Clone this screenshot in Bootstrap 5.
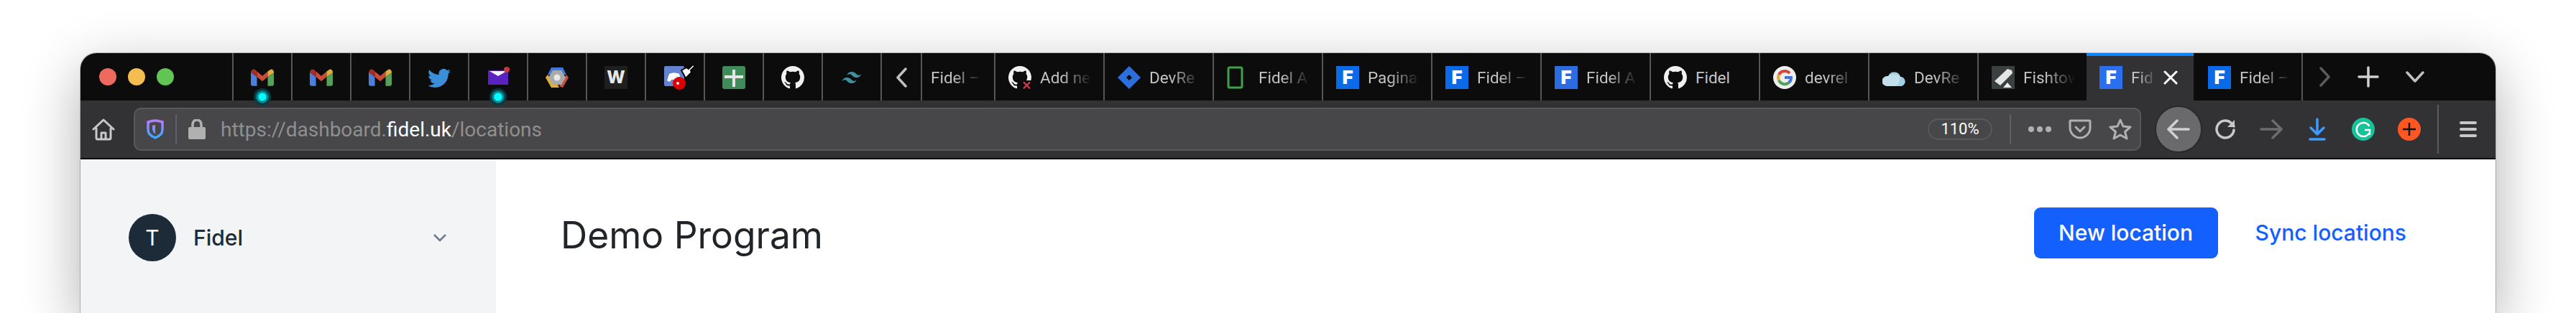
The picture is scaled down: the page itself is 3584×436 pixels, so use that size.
<!doctype html>
<html lang="en"><head><meta charset="utf-8"><title>Demo Program</title>
<link href="https://cdn.jsdelivr.net/npm/bootstrap@5.3.0/dist/css/bootstrap.min.css" rel="stylesheet">
<style>
html,body{height:436px;overflow:hidden;background:#fff}
body{font-family:"Inter","Liberation Sans",sans-serif}
.stage{padding:74px 112px 0}
.win{height:362px;border-radius:22px 22px 0 0;box-shadow:0 24px 80px rgba(0,0,0,.32),0 0 0 1px rgba(0,0,0,.22);background:#fff;overflow:hidden}
.tabbar{height:66px;background:#0c0c0c;color:#b4b4b4}
.lights{width:211px;padding-left:26px;gap:16px;flex:none}
.light{width:24px;height:24px;border-radius:50%}
.l-red{background:#ee6a5f}.l-yel{background:#f5bd4f}.l-grn{background:#61c454}
.pin,.wtab{height:66px;border-left:2px solid #565656;position:relative;flex:none;padding-top:2px}
.pin{width:82px;justify-content:center}
.wtab{width:152px;padding-left:18px;gap:12px}
.wtab.first{width:102px;padding-left:12px}
.wtab.cur{width:149px;background:#323234;border-left:0;padding-top:0;padding-bottom:2px;border-top:4px solid #0a84ff}
.wtab.after{border-left:0;padding-left:20px;border-right:2px solid #565656}
.scrollbtn{width:56px}
.ttl{flex:1;min-width:0;overflow:hidden;white-space:nowrap;font:400 22.5px/32px "Roboto","Liberation Sans",sans-serif;color:#c4c4c4;-webkit-mask-image:linear-gradient(to right,#000 30px,transparent 72px);mask-image:linear-gradient(to right,#000 30px,transparent 72px)}
.ttl.open{-webkit-mask-image:none;mask-image:none}
.ttl.short{flex:none;width:33px;-webkit-mask-image:linear-gradient(to right,#000 10px,transparent 36px);mask-image:linear-gradient(to right,#000 10px,transparent 36px)}
.ico{width:32px;height:32px;flex:none;display:block}
.ico-wide{width:44px;height:36px;flex:none;display:block;margin-left:14px}
.ffav{width:32px;height:32px;flex:none;background:#0a6ae8;color:#fff;font:900 26px/32px "Inter",sans-serif;text-align:center}
.ffav.alt{background:#2b6de0}.ffav.hi{background:#2a6ff0}
.wfav{width:32px;height:32px;background:#1f1f1f;color:#e8e8e8;font:800 24px/32px "Inter",sans-serif;text-align:center}
.sound{position:absolute;left:28px;bottom:-7px;width:24px;height:24px;border-radius:50%;background:radial-gradient(circle,#0ff 0 5px,#0a8d96 6px 8px,#073c42 9px 12px)}
.closex{margin:0 23px 0 0;flex:none}
.tailend{padding-left:23px}
.plusgap,.chevgap{margin-left:37px}
.bar-tools{height:80px;background:#323234;padding-left:16px}
.homeico{margin-right:26px}
.edge{height:2px;background:#050505}
.urlbox{width:2793px;height:60px;background:#474749;border:2px solid #59595b;border-radius:10px;padding:0 11px 0 16px;flex:none}
.sep-v{width:2px;height:42px;background:#5c6068;flex:none}
.addr{font:400 28px/1 "Roboto","Liberation Sans",sans-serif;color:#8f8f90;white-space:nowrap;margin-left:21px;padding-top:2px}
.addr b{font-weight:400;color:#fff}
.zoompill{width:90px;height:30px;border:2px solid #58585a;border-radius:15px;color:#fff;font:400 22px/26px "Roboto",sans-serif;text-align:center}
.backcirc{width:66px;height:66px;border-radius:50%;background:#6a6a6c;border:2px solid #2a2a2c;margin-left:19px;flex:none}
.slot{width:64px;height:40px;flex:none}
.sep-tall{width:2px;height:68px;background:#5a5a5c;margin-left:7px;flex:none}
.hamb{margin-left:29px;flex:none}
.side{width:578px;background:#f3f4f6;padding:76px 68px 0 67px;gap:24px;height:214px;flex:none}
.avatar{width:66px;height:66px;border-radius:50%;background:#1d2a38;color:#fff;font:400 30px/66px "Inter",sans-serif;text-align:center}
.orgname{font:500 30px/30px "Inter",sans-serif;color:#1d2a38;margin-top:18px}
.orgchev{margin-top:27px}
.mainpane{padding:67px 124px 0 90px}
.pagehead{height:71px}
.pagetitle{font:400 51.5px/1 "Inter",sans-serif;color:#212529;margin:0;padding-top:6px}
.btn.newbtn{width:256px;height:71px;background:#1360ff;border:0;border-radius:9px;color:#fff;font:500 30px/71px "Inter",sans-serif;padding:0}
.btn.syncbtn{background:none;border:0;color:#1360ff;font:500 30px/71px "Inter",sans-serif;padding:0;margin-left:52px;text-decoration:none}
</style></head>
<body>
<svg width="0" height="0" class="position-absolute">
<symbol id="gm" viewBox="0 0 30 22"><path fill="#4a7fdc" d="M0 4l8 6v12H2a2 2 0 0 1-2-2z"/><path fill="#a52d25" d="M0 5c0-4 3-6 6-4l2 2v7L0 4z"/><path fill="#cc4a38" d="M8 3l7 6 7-6v7l-7 6-7-6z"/><path fill="#e0ac3a" d="M22 3l3-2c2-2 5 0 5 3v1l-8 5z"/><path fill="#55a05a" d="M22 10l8-5v15a2 2 0 0 1-2 2h-6z"/></symbol>
<symbol id="gh" viewBox="0 0 16 16"><path fill="#f0f0f0" d="M8 0C3.58 0 0 3.58 0 8c0 3.54 2.29 6.53 5.47 7.59.4.07.55-.17.55-.38 0-.19-.01-.82-.01-1.49-2.01.37-2.53-.49-2.69-.94-.09-.23-.48-.94-.82-1.13-.28-.15-.68-.52-.01-.53.63-.01 1.08.58 1.23.82.72 1.21 1.87.87 2.33.66.07-.52.28-.87.51-1.07-1.78-.2-3.64-.89-3.64-3.95 0-.87.31-1.59.82-2.15-.08-.2-.36-1.02.08-2.12 0 0 .67-.21 2.2.82.64-.18 1.32-.27 2-.27.68 0 1.36.09 2 .27 1.53-1.04 2.2-.82 2.2-.82.44 1.1.16 1.92.08 2.12.51.56.82 1.27.82 2.15 0 3.07-1.87 3.75-3.65 3.95.29.25.54.73.54 1.48 0 1.07-.01 1.93-.01 2.2 0 .21.15.46.55.38A8.012 8.012 0 0 0 16 8c0-4.42-3.58-8-8-8z"/></symbol>
</svg>
<div class="stage">
<div class="win">
  <div class="tabbar d-flex">
    <div class="lights d-flex align-items-center"><span class="light l-red"></span><span class="light l-yel"></span><span class="light l-grn"></span></div>
    <div class="pin d-flex align-items-center"><svg class="ico"><use href="#gm"/></svg><span class="sound"></span></div>
    <div class="pin d-flex align-items-center"><svg class="ico"><use href="#gm"/></svg></div>
    <div class="pin d-flex align-items-center"><svg class="ico"><use href="#gm"/></svg></div>
    <div class="pin d-flex align-items-center"><svg class="ico" viewBox="0 0 16 16"><path fill="#3b8fd9" d="M5.026 15c6.038 0 9.341-5.003 9.341-9.334 0-.14 0-.282-.006-.422A6.685 6.685 0 0 0 16 3.542a6.658 6.658 0 0 1-1.889.518 3.301 3.301 0 0 0 1.447-1.817 6.533 6.533 0 0 1-2.087.793A3.286 3.286 0 0 0 7.875 6.03a9.325 9.325 0 0 1-6.767-3.429 3.289 3.289 0 0 0 1.018 4.382A3.323 3.323 0 0 1 .64 6.575v.045a3.288 3.288 0 0 0 2.632 3.218 3.203 3.203 0 0 1-.865.115 3.23 3.23 0 0 1-.614-.057 3.283 3.283 0 0 0 3.067 2.277A6.588 6.588 0 0 1 .78 13.58a6.32 6.32 0 0 1-.78-.045A9.344 9.344 0 0 0 5.026 15z"/></svg></div>
    <div class="pin d-flex align-items-center"><svg class="ico" viewBox="0 0 32 32"><rect x="2" y="6" width="28" height="20" fill="#5a22c0"/><path fill="#f4f4f4" d="M4 7h24l-12 7z"/><circle cx="28" cy="5" r="4" fill="#c8383c"/></svg><span class="sound"></span></div>
    <div class="pin d-flex align-items-center"><svg class="ico" viewBox="0 0 32 32"><path fill="#3f78e0" d="M8 2h16l5 10H3z"/><path fill="#c4523f" d="M29 12l3 4-8 14-5-2 6-10z"/><path fill="#e0ac3a" d="M3 12l-3 4 8 14h11l-3-6H11L6 16z"/><path fill="#aaa" d="M10 6h12l6 10-6 10H10L4 16z"/><circle cx="16" cy="16" r="4.5" fill="#e8e8e8"/></svg></div>
    <div class="pin d-flex align-items-center"><div class="wfav">W</div></div>
    <div class="pin d-flex align-items-center"><svg class="ico-wide" viewBox="0 0 44 36"><rect x="0" y="2" width="28" height="28" rx="2" fill="#6484d2"/><path fill="#fff" d="M7 13c4-2 10-2 14 0l3 9c-2 2-4 2-5 1l-1-2H10l-1 2c-1 1-3 1-5-1z"/><circle cx="21" cy="26" r="9" fill="#d00"/><circle cx="19" cy="26" r="2" fill="#eee"/><path fill="#fff" stroke="#000" stroke-width="2" d="M24 8l7-4 3 2 6-6 3 2-6 6 1 3-8 8z"/></svg></div>
    <div class="pin d-flex align-items-center"><svg class="ico" viewBox="0 0 32 32"><rect width="32" height="32" rx="3" fill="#3f8c5a"/><path fill="#e6e6e6" d="M14 5h4v8h11v4H18v12h-4V17H3v-4h11z"/></svg></div>
    <div class="pin d-flex align-items-center"><svg class="ico"><use href="#gh"/></svg></div>
    <div class="pin d-flex align-items-center"><svg class="ico" viewBox="0 0 24 24"><path fill="#3f8f9f" d="M12 6c-2.67 0-4.33 1.33-5 4 1-1.33 2.17-1.83 3.5-1.5.76.19 1.31.74 1.91 1.35.98 1 2.12 2.15 4.59 2.15 2.67 0 4.33-1.33 5-4-1 1.33-2.17 1.83-3.5 1.5-.76-.19-1.31-.74-1.91-1.35C15.61 7.15 14.47 6 12 6zM7 12c-2.67 0-4.33 1.33-5 4 1-1.33 2.17-1.83 3.5-1.5.76.19 1.31.74 1.91 1.35C8.39 16.85 9.53 18 12 18c2.67 0 4.33-1.33 5-4-1 1.33-2.17 1.83-3.5 1.5-.76-.19-1.31-.74-1.91-1.35C10.61 13.15 9.47 12 7 12z"/></svg></div>
    <div class="pin scrollbtn d-flex align-items-center"><svg width="16" height="28" viewBox="0 0 16 28"><path d="M14 2L3 14l11 12" fill="none" stroke="#c0c0c0" stroke-width="3.5" stroke-linecap="round" stroke-linejoin="round"/></svg></div>
    <div class="wtab first d-flex align-items-center"><span class="ttl">Fidel –</span></div>
    <div class="wtab d-flex align-items-center"><svg class="ico" viewBox="0 0 16 16"><use href="#gh"/><path fill="#0c0c0c" d="M9.500 10h6.500v6H9.500z"/><path d="M10.500 11.200l4.500 4.500m0-4.500l-4.500 4.500" stroke="#d8344a" stroke-width="1.100"/></svg><span class="ttl">Add ne</span></div>
    <div class="wtab d-flex align-items-center"><svg class="ico" viewBox="0 0 32 32"><path fill="#2b6fdc" d="M16 0l16 16-16 16L0 16zm0 12l-4 4 4 4 4-4z"/></svg><span class="ttl">DevRe</span></div>
    <div class="wtab d-flex align-items-center"><svg class="ico" viewBox="0 0 32 32"><rect x="2" y="2" width="19" height="28" rx="2" fill="none" stroke="#3fa04a" stroke-width="3"/></svg><span class="ttl">Fidel A</span></div>
    <div class="wtab d-flex align-items-center"><div class="ffav">F</div><span class="ttl">Pagina</span></div>
    <div class="wtab d-flex align-items-center"><div class="ffav">F</div><span class="ttl">Fidel –</span></div>
    <div class="wtab d-flex align-items-center"><div class="ffav alt">F</div><span class="ttl">Fidel A</span></div>
    <div class="wtab d-flex align-items-center"><svg class="ico"><use href="#gh"/></svg><span class="ttl open">Fidel</span></div>
    <div class="wtab d-flex align-items-center"><svg class="ico" viewBox="0 0 32 32"><circle cx="16" cy="16" r="16" fill="#eee"/><path d="M23 10a9.500 9.500 0 0 0-7-3" fill="none" stroke="#d8453a" stroke-width="4"/><path d="M16 7a9 9 0 0 0-8 5" fill="none" stroke="#d8453a" stroke-width="4"/><path d="M8 12a9 9 0 0 0 0 8" fill="none" stroke="#e0ac3a" stroke-width="4"/><path d="M8 20a9 9 0 0 0 14 3" fill="none" stroke="#4aa455" stroke-width="4"/><path d="M22 23a9 9 0 0 0 3-7H16" fill="none" stroke="#3f78e0" stroke-width="4"/></svg><span class="ttl">devrel</span></div>
    <div class="wtab d-flex align-items-center"><svg class="ico" viewBox="0 0 32 32"><path fill="#c2dfea" d="M7 28a7 7 0 0 1-1-14h2a9 9 0 0 1 17 1 6.500 6.500 0 0 1 0 13z"/><path fill="#9fd0e6" d="M9 13a9 9 0 0 1 16 2c-4-4-11-4-16-2zM19 28c3-2 5-6 6-13a6.500 6.500 0 0 1 0 13z"/></svg><span class="ttl">DevRe</span></div>
    <div class="wtab d-flex align-items-center"><svg class="ico" viewBox="0 0 32 32"><rect width="32" height="32" fill="#3a4040"/><path fill="#e4e4e4" d="M4 21L22 4l6 2 1 4-17 17z"/><path fill="#eee" d="M16 30l6-7 6 7z"/></svg><span class="ttl">Fishtow</span></div>
    <div class="wtab cur d-flex align-items-center"><div class="ffav hi">F</div><span class="ttl short">Fid</span><svg width="20" height="20" viewBox="0 0 20 20" class="closex"><path d="M2 2l16 16M18 2L2 18" stroke="#fff" stroke-width="3" stroke-linecap="round"/></svg></div>
    <div class="wtab after d-flex align-items-center"><div class="ffav">F</div><span class="ttl">Fidel –</span></div>
    <div class="d-flex align-items-center flex-grow-1 tailend">
      <svg width="16" height="28" viewBox="0 0 16 28"><path d="M2 2l11 12L2 26" fill="none" stroke="#5a5a5a" stroke-width="3.5" stroke-linecap="round" stroke-linejoin="round"/></svg>
      <svg width="30" height="30" viewBox="0 0 30 30" class="plusgap"><path d="M15 2v26M2 15h26" stroke="#d0d0d0" stroke-width="3.5" stroke-linecap="round"/></svg>
      <svg width="26" height="18" viewBox="0 0 26 18" class="chevgap"><path d="M2 3l11 12L24 3" fill="none" stroke="#c0c0c0" stroke-width="3.5" stroke-linecap="round" stroke-linejoin="round"/></svg>
    </div>
  </div>
  <div class="bar-tools d-flex align-items-center">
    <svg class="ico homeico" viewBox="0 0 32 32"><path d="M2 16L16 3l14 13M6 15v13a2 2 0 0 0 2 2h16a2 2 0 0 0 2-2V15M13 30v-9h6v9" fill="none" stroke="#c8c8c8" stroke-width="3" stroke-linecap="round" stroke-linejoin="round"/></svg>
    <div class="urlbox d-flex align-items-center">
      <svg width="24" height="28" viewBox="0 0 24 28" class="flex-shrink-0"><defs><linearGradient id="shg" x1="0" y1="0" x2="0" y2="1"><stop offset="0" stop-color="#b47cff"/><stop offset="1" stop-color="#38a8ff"/></linearGradient></defs><path d="M12 2c4 0 7 1 10 2v11c0 5-5 9-10 11C7 24 2 20 2 15V4c3-1 6-2 10-2z" fill="none" stroke="url(#shg)" stroke-width="3.5"/><path d="M12 8v13c-2-2-4-4-4-7V9z" fill="url(#shg)"/></svg>
      <span class="sep-v ms-3"></span>
      <svg width="24" height="28" viewBox="0 0 24 28" class="ms-3 flex-shrink-0"><rect y="11" width="24" height="17" rx="2" fill="#b0b0b0"/><path d="M6 12V7a6 6 0 0 1 12 0v5" fill="none" stroke="#b0b0b0" stroke-width="3.5"/></svg>
      <span class="addr flex-grow-1">https://dashboard.<b>fidel.uk</b>/locations</span>
      <span class="zoompill flex-shrink-0">110%</span>
      <span class="sep-v ms-4"></span>
      <svg width="32" height="8" viewBox="0 0 32 8" class="ms-4 flex-shrink-0"><circle cx="4" cy="4" r="4" fill="#b0b0b0"/><circle cx="16" cy="4" r="4" fill="#b0b0b0"/><circle cx="28" cy="4" r="4" fill="#b0b0b0"/></svg>
      <svg width="32" height="28" viewBox="0 0 32 28" class="ms-4 flex-shrink-0"><path d="M3 2h26a1 1 0 0 1 1 1v9c0 8-7 14-14 14S2 20 2 12V3a1 1 0 0 1 1-1z" fill="none" stroke="#b0b0b0" stroke-width="3"/><path d="M10 11l6 6 6-6" fill="none" stroke="#b0b0b0" stroke-width="3" stroke-linecap="round" stroke-linejoin="round"/></svg>
      <svg width="32" height="32" viewBox="0 0 32 32" class="ms-4 flex-shrink-0"><path d="M16 3l4 9 10 1-7.500 6.500L25 29l-9-5-9 5 2.500-9.500L2 13l10-1z" fill="none" stroke="#b0b0b0" stroke-width="3" stroke-linejoin="round"/></svg>
    </div>
    <div class="backcirc d-flex align-items-center justify-content-center"><svg width="32" height="28" viewBox="0 0 32 28"><path d="M30 14H3M14 2L2 14l12 12" fill="none" stroke="#d0d0d0" stroke-width="3.5" stroke-linecap="round" stroke-linejoin="round"/></svg></div>
    <div class="slot d-flex align-items-center justify-content-center"><svg width="30" height="30" viewBox="0 0 30 30"><path d="M27 16a12 12 0 1 1-4-10l4 5" fill="none" stroke="#c8c8c8" stroke-width="3.5" stroke-linecap="round"/><path d="M28 2v10H18z" fill="#c8c8c8"/></svg></div>
    <div class="slot d-flex align-items-center justify-content-center"><svg width="32" height="28" viewBox="0 0 32 28"><path d="M2 14h27M18 2l12 12-12 12" fill="none" stroke="#6c6c6e" stroke-width="3.5" stroke-linecap="round" stroke-linejoin="round"/></svg></div>
    <div class="slot d-flex align-items-center justify-content-center"><svg width="24" height="32" viewBox="0 0 24 32"><path d="M12 2v21M3 14l9 9 9-9" fill="none" stroke="#3d9bff" stroke-width="3.5" stroke-linecap="round" stroke-linejoin="round"/><path d="M2 30h20" stroke="#3d9bff" stroke-width="3.5" stroke-linecap="round"/></svg></div>
    <div class="slot d-flex align-items-center justify-content-center"><svg width="32" height="32" viewBox="0 0 32 32"><circle cx="16" cy="16" r="16" fill="#15c39a"/><path d="M24 11a9.500 9.500 0 1 0 0 11" fill="none" stroke="#fff" stroke-width="2.5" stroke-linecap="round"/><path d="M18 17h7v7" fill="none" stroke="#fff" stroke-width="2.5"/></svg></div>
    <div class="slot d-flex align-items-center justify-content-center"><svg width="32" height="32" viewBox="0 0 32 32"><circle cx="16" cy="16" r="16" fill="#ff5722"/><path d="M16 7v18M7 16h18" stroke="#111" stroke-width="2.5"/></svg></div>
    <span class="sep-tall"></span>
    <svg width="24" height="24" viewBox="0 0 24 24" class="hamb"><path d="M2 3h20M2 12h20M2 21h20" stroke="#c8c8c8" stroke-width="4" stroke-linecap="round"/></svg>
  </div>
  <div class="edge"></div>
  <div class="d-flex">
    <div class="side d-flex">
      <div class="avatar flex-shrink-0">T</div>
      <span class="orgname flex-grow-1">Fidel</span>
      <svg width="20" height="12" viewBox="0 0 20 12" class="flex-shrink-0 orgchev"><path d="M2 2l8 8 8-8" fill="none" stroke="#6c7a8c" stroke-width="2.5"/></svg>
    </div>
    <div class="mainpane flex-grow-1">
      <div class="pagehead d-flex align-items-center justify-content-between">
        <h1 class="pagetitle">Demo Program</h1>
        <div class="d-flex">
          <button class="btn newbtn">New location</button>
          <a class="btn syncbtn" href="#">Sync locations</a>
        </div>
      </div>
    </div>
  </div>
</div>
</div>
</body></html>
